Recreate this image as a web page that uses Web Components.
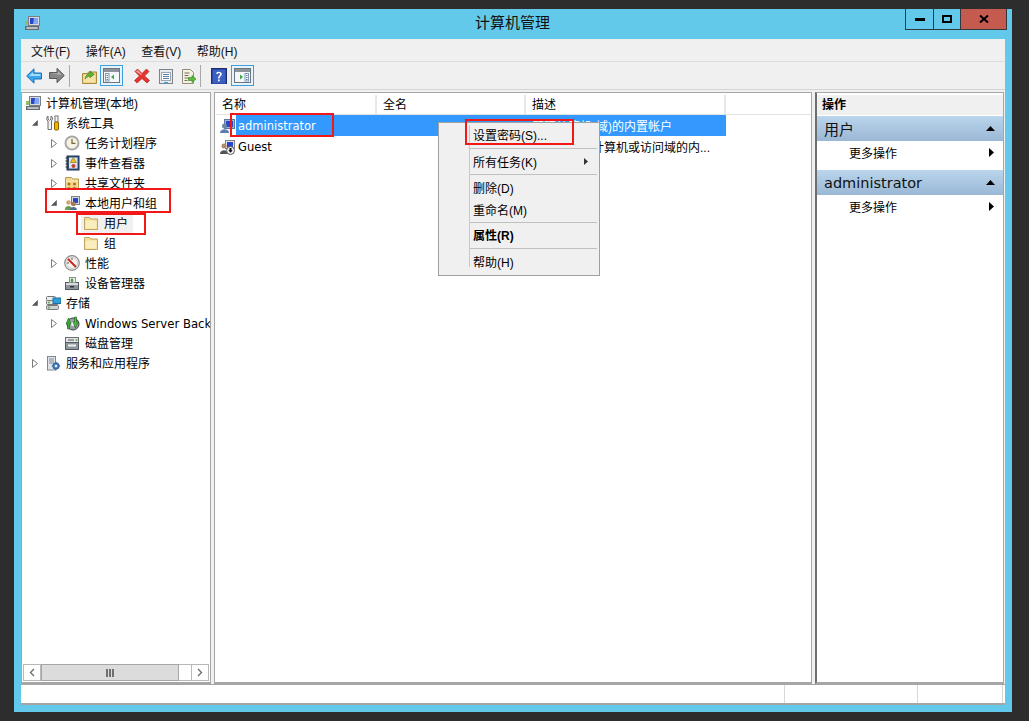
<!DOCTYPE html>
<html lang="zh">
<head>
<meta charset="utf-8">
<title>计算机管理</title>
<style>
  html, body { margin: 0; height: 721px; overflow: hidden; background: #2d2d2d; }
  body { position: relative; font: 12px "Liberation Sans", "Noto Sans CJK SC", sans-serif; color: #000; }
</style>
</head>
<body>
<app-window>
  <title-bar slot="title">计算机管理</title-bar>
  <menu-bar slot="menu"></menu-bar>
  <tool-bar slot="tools"></tool-bar>
  <tree-pane slot="tree">
    <tree-item level="0" icon="computer">计算机管理(本地)</tree-item>
    <tree-item level="1" exp="open" icon="tools">系统工具</tree-item>
    <tree-item level="2" exp="closed" icon="clock">任务计划程序</tree-item>
    <tree-item level="2" exp="closed" icon="event">事件查看器</tree-item>
    <tree-item level="2" exp="closed" icon="share">共享文件夹</tree-item>
    <tree-item level="2" exp="open" icon="users">本地用户和组</tree-item>
    <tree-item level="3" icon="folder" selected>用户</tree-item>
    <tree-item level="3" icon="folder">组</tree-item>
    <tree-item level="2" exp="closed" icon="perf">性能</tree-item>
    <tree-item level="2" icon="device">设备管理器</tree-item>
    <tree-item level="1" exp="open" icon="storage">存储</tree-item>
    <tree-item level="2" exp="closed" icon="backup" latin>Windows Server Backup</tree-item>
    <tree-item level="2" icon="disk">磁盘管理</tree-item>
    <tree-item level="1" exp="closed" icon="services">服务和应用程序</tree-item>
  </tree-pane>
  <list-pane slot="list">
    <list-row icon="admin" name="administrator" desc="管理计算机(域)的内置帐户" selected></list-row>
    <list-row icon="guest" name="Guest" desc="供来宾访问计算机或访问域的内..."></list-row>
  </list-pane>
  <action-pane slot="actions"></action-pane>
  <status-bar slot="status"></status-bar>
</app-window>
<context-menu></context-menu>
<red-box style="left:45px;top:188px;width:126px;height:25px"></red-box>
<red-box style="left:76px;top:213px;width:70px;height:22px"></red-box>
<red-box style="left:230px;top:113px;width:104px;height:24px"></red-box>
<red-box style="left:465px;top:119px;width:109px;height:26px"></red-box>

<script>
const ICONS = {
  computer: `<rect x="4.5" y="1.5" width="11" height="9" fill="#d5d8dc" stroke="#7b8087"/><rect x="6" y="3" width="8" height="6" fill="#2b45c8"/><path d="M10 3h4v6H9z" fill="#7fa6ee"/><rect x="1.5" y="11.5" width="13" height="3" fill="#9a9fa5" stroke="#666b70"/><path d="M3 13h10" stroke="#ddd"/><rect x="1" y="6" width="3" height="4" fill="#8cbf6a"/>`,
  tools: `<path d="M3 1v3l1.5 1.5L6 4V1c1.6.8 2 2.5 1 4L6.5 6v8.5H3V6C1.3 5 1.3 2 3 1z" fill="#f4f4f4" stroke="#6d6d6d"/><rect x="10" y="1" width="3" height="6" fill="#f6f6f6" stroke="#777"/><rect x="9.5" y="7" width="4" height="8" rx="1" fill="#f0b400" stroke="#8a6500"/>`,
  clock: `<circle cx="8" cy="8" r="7.5" fill="#a9a9a9"/><circle cx="8" cy="8" r="5.5" fill="#f7f3e3"/><path d="M8 4v4.3h3.5" fill="none" stroke="#7a6a3c" stroke-width="1.3"/>`,
  event: `<rect x="3" y="1" width="12" height="14" fill="#30527c" stroke="#1f3553"/><rect x="5" y="2.5" width="8.5" height="11" fill="#dce4ee"/><path d="M1.5 3h3M1.5 6h3M1.5 9h3M1.5 12h3" stroke="#333"/><path d="M9.3 2.5l3 5h-6z" fill="#f2c21a" stroke="#8c6a00" stroke-width=".6"/><circle cx="9.5" cy="11" r="2" fill="#c8423c"/>`,
  share: `<path d="M1.5 4V2.5h6L9 4h5.5v10.5h-13z" fill="#f3d88a" stroke="#b49a58"/><path d="M2 6h12" stroke="#fbedc0"/><circle cx="5" cy="9" r="1.5" fill="#b46a28"/><path d="M2.5 14c0-2.5 5-2.5 5 0z" fill="#7a9c46"/><circle cx="10.5" cy="9" r="1.5" fill="#b46a28"/><path d="M8 14c0-2.5 5-2.5 5 0z" fill="#c0503c"/>`,
  users: `<rect x="7.5" y="1.5" width="8" height="8" fill="#d9dcdf" stroke="#7b8087"/><rect x="9" y="3" width="5" height="5" fill="#2b45c8"/><circle cx="4.5" cy="7.5" r="2.3" fill="#d1a477"/><path d="M1 14c0-4 7-4 7 0v1H1z" fill="#6f9a52"/><circle cx="9.5" cy="9" r="2.3" fill="#a97a50"/><path d="M6 15c0-4 7-4 7 0z" fill="#4f6f98"/>`,
  folder: `<path d="M1.5 3.5V2.5h5L8 4h6.5v10.5h-13z" fill="#f5dc94" stroke="#bda566"/><path d="M2.5 13.5V6c4-1 8-1 11 0v7.5z" fill="#fbeebe"/>`,
  perf: `<circle cx="8" cy="8" r="7.3" fill="#f6f4ee" stroke="#8a8a8a" stroke-width="1.2"/><circle cx="8" cy="8" r="5.5" fill="none" stroke="#c9c9c9"/><path d="M4 4l8 8" stroke="#c8201c" stroke-width="1.8"/><path d="M8 3v2M3 8h2" stroke="#555"/>`,
  device: `<rect x="1.5" y="7.5" width="13" height="7" fill="#8e959c" stroke="#555b62"/><rect x="2" y="8" width="12" height="2" fill="#d8dadd"/><rect x="5.5" y="2.5" width="6" height="5" fill="#f1f2f2" stroke="#8a8f94"/><path d="M8 3l2 2.5H9v2H7v-2H6z" fill="#54a04a"/><rect x="6" y="11" width="4" height="1.5" fill="#30353a"/>`,
  storage: `<rect x="1.5" y="5.5" width="12" height="4" rx="1" fill="#dfe1e3" stroke="#777"/><rect x="1.5" y="10.5" width="12" height="4" rx="1" fill="#cfd2d4" stroke="#777"/><rect x="1.5" y="1.5" width="9" height="4" rx="1" fill="#eceded" stroke="#777"/><rect x="8" y="3" width="8" height="5.5" fill="#2f9fd8" stroke="#1b6fa0"/><circle cx="4" cy="12.5" r="1" fill="#66aa44"/><circle cx="4" cy="7.5" r="1" fill="#66aa44"/>`,
  backup: `<circle cx="9" cy="9" r="6" fill="#9aa0a3" stroke="#3a3d40"/><circle cx="9" cy="9" r="2" fill="#f0f0f0"/><path d="M2 9l2.5-6L7 9H5.5v5h-2V9z" fill="#3faa3a" stroke="#1c6a1c" stroke-width=".6"/><path d="M9 7l2.5 6L14 7h-1.5V2h-2v5z" fill="#4cbc44" stroke="#1c6a1c" stroke-width=".6"/>`,
  disk: `<rect x="1.5" y="2.5" width="13" height="5" fill="#e4e5e6" stroke="#6a6e72"/><rect x="1.5" y="7.5" width="13" height="7" fill="#8f969c" stroke="#555b62"/><path d="M4 5h6" stroke="#555"/><rect x="4" y="9.5" width="8" height="2" fill="#f1f1f1"/><circle cx="12.5" cy="5" r="1" fill="#63a84a"/>`,
  services: `<rect x="2.5" y="1.5" width="8" height="13.5" fill="#dfe3e8" stroke="#80868d"/><path d="M4 4h5M4 6h5M4 8h5" stroke="#858c94"/><circle cx="11" cy="11" r="3.2" fill="#4d83c4" stroke="#2a5a94"/><circle cx="11" cy="11" r="1.2" fill="#e8f0fa"/><path d="M11 6.8v1.5M11 13.8v1.4M6.8 11h1.5M13.8 11h1.4" stroke="#3a6ea8" stroke-width="1.2"/>`,
  admin: `<rect x="5.5" y="1.5" width="10" height="9" fill="#9db8dc" stroke="#5e78a0"/><rect x="7" y="3" width="7" height="6" fill="#2b45c8"/><circle cx="5.5" cy="8" r="2.5" fill="#6d86a8"/><path d="M1 15c0-5 9-5 9 0z" fill="#5a7eb0"/>`,
  guest: `<rect x="6.5" y="1.5" width="9" height="8" fill="#dfe3e8" stroke="#7b8087"/><rect x="8" y="3" width="6" height="5" fill="#2b45c8"/><circle cx="5" cy="7" r="2.5" fill="#b08a62"/><path d="M1 15c0-5 8-5 8 0z" fill="#4b5560"/><circle cx="11.5" cy="11.5" r="4" fill="#f4f4f4" stroke="#555"/><path d="M10.5 9h2v2.3h1.2l-2.2 2.5-2.2-2.5h1.2z" fill="#111"/>`,
  back: `<path d="M.7 8L8 .8V5h7.5v6H8v4.200z" fill="#38a6ee" stroke="#1a6fb8"/><path d="M3 8l4-4v2h7.500v2z" fill="#a4dcfb"/>`,
  forward: `<path d="M16.300 8.500L9 1.300V5.500H1.500v6H9v4.200z" fill="#868686" stroke="#5a5a5a"/><path d="M2.500 6.500h7.500V4l3.500 4z" fill="#b5b5b5"/>`,
  up: `<path d="M1.5 5.5h5l1-1.5h8v11.5h-14z" fill="#e8c873" stroke="#a98c42"/><path d="M2.5 14.5V7h12v7.5z" fill="#f5e2a4"/><path d="M4 11c1-4 3-5.5 5-6V3l4 3.5-4 3V8C7.5 8 5.5 9 4 11z" fill="#5fb63c" stroke="#2f8020" stroke-width=".7"/>`,
  pane: `<rect x=".5" y="1.5" width="16" height="14" fill="#f5f7fa" stroke="#6f757c"/><rect x="1" y="2" width="15" height="3" fill="#8c939b"/><rect x="2.5" y="6.5" width="3.5" height="7.5" fill="#fff" stroke="#7d9ab5"/><path d="M3.5 8.5h1.5M3.5 10.5h1.5M3.5 12.5h1.5" stroke="#5e7d9a"/>`,
  del: `<path d="M1 3.5L3.5 1 8 5.5 12.5 1 15 3.5 10.5 8 15.5 12.5 13 15 8 10.5 3 15 .5 12.5 5.5 8z" fill="#e5332e" stroke="#b52420" stroke-width=".7"/><path d="M2 3.5L3.5 2 8 6.5l-1 .5z" fill="#f8a29e"/>`,
  props: `<rect x="1.5" y="1.5" width="13" height="14" fill="#e7e9ec" stroke="#7d8389"/><rect x="3.5" y="4.5" width="9" height="8" fill="#fff" stroke="#a0a6ad"/><path d="M5 6.5h6M5 8.5h6M5 10.5h6" stroke="#5a7da6"/><rect x="6" y="14" width="4" height="1.5" fill="#3ea3de"/>`,
  export: `<path d="M2.5 1.5h8l3 3v11h-11z" fill="#f7f2dc" stroke="#8f8f80"/><path d="M4.5 5h5M4.5 7.5h4M4.5 10h4M4.5 12.5h3" stroke="#6d6d6d"/><path d="M8.5 9.5H12V7.5l4 3.5-4 3.5v-2H8.5z" fill="#5dbb3e" stroke="#2e7f22" stroke-width=".6"/>`,
  help: `<rect x=".5" y=".5" width="15" height="16" fill="#2f4ba8" stroke="#1b2c6e"/><rect x="2" y="2" width="12" height="13" fill="#3a60c4"/><path d="M5 5.5C5.5 3 10.5 3 10.8 5.8 11 8 8.7 8 8.6 10.5H7.1C7 7.500 9.2 7.500 9 5.900 8.800 4.600 7 4.700 6.700 6z" fill="#fff"/><rect x="7" y="11.5" width="1.7" height="1.8" fill="#fff"/>`,
  panegreen: `<rect x=".5" y="1.5" width="16" height="14" fill="#f5f7fa" stroke="#6f757c"/><rect x="1" y="2" width="15" height="3" fill="#8c939b"/><rect x="11" y="6.5" width="3.5" height="7.5" fill="#fff" stroke="#7d9ab5"/><path d="M12 8.5h1.5M12 10.5h1.5M12 12.5h1.5" stroke="#5e7d9a"/><path d="M6 7.5l3 2.5-3 2.5z" fill="#3aa84a"/>`
};
ICONS.panegreenleft = ICONS.pane + `<path d="M11 7.5L8 10l3 2.5z" fill="#3aa84a"/>`;

class WinIcon extends HTMLElement {
  connectedCallback() {
    const s = this.getAttribute('size') || 16;
    const w = this.getAttribute('w') || s;
    this.attachShadow({ mode: 'open' }).innerHTML = `
      <style>:host { display: inline-flex; flex: none; width: ${w}px; height: ${s}px; } svg { display: block; }</style>
      <svg width="${w}" height="${s}" viewBox="0 0 ${w == 17 ? 17 : 16} ${w == 17 ? 17 : 16}">${ICONS[this.getAttribute('name')] || ''}</svg>`;
  }
}
customElements.define('win-icon', WinIcon);

class AppWindow extends HTMLElement {
  constructor() {
    super();
    this.attachShadow({ mode: 'open' }).innerHTML = `
      <style>
        :host { display: block; position: absolute; left: 14px; top: 9px; width: 998px; height: 703px; box-sizing: border-box;
                background: #63c9ea; padding: 0 7px 7px; }
        .frame { display: flex; flex-direction: column; height: 100%; }
        .inner { flex: 1; display: flex; flex-direction: column; background: #f0f0f0; min-height: 0; }
        .panes { flex: 1; display: flex; padding-top: 2px; min-height: 0; }
      </style>
      <div class="frame">
        <slot name="title"></slot>
        <div class="inner">
          <slot name="menu"></slot>
          <slot name="tools"></slot>
          <div class="panes">
            <slot name="tree"></slot>
            <slot name="list"></slot>
            <slot name="actions"></slot>
          </div>
          <slot name="status"></slot>
        </div>
      </div>`;
  }
}
customElements.define('app-window', AppWindow);

class TitleBar extends HTMLElement {
  constructor() {
    super();
    this.attachShadow({ mode: 'open' }).innerHTML = `
      <style>
        :host { display: flex; height: 30px; position: relative; font-size: 15px; line-height: 28px; justify-content: center; flex: none; }
        .t { padding-right: 1px; color: #111; }
        win-icon { position: absolute; left: 3px; top: 6px; }
        .btns { position: absolute; right: -2px; top: 0; display: flex; height: 20px; border: solid #33383c; border-width: 0 1px 1px; }
        .b { display: flex; align-items: center; justify-content: center; width: 27px; border-left: 1px solid #33383c; box-sizing: border-box; }
        .b:first-child { border-left: 0; width: 27px; }
        .close { width: 46px; background: #c55a4e; }
      </style>
      <win-icon name="computer"></win-icon>
      <span class="t"><slot></slot></span>
      <div class="btns">
        <div class="b"><svg width="10" height="3"><rect width="10" height="3" fill="#000"/></svg></div>
        <div class="b"><svg width="10" height="8"><rect x="1" y="1" width="8" height="6" fill="none" stroke="#000" stroke-width="2"/></svg></div>
        <div class="b close"><svg width="10" height="8"><path d="M1 .5l8 7M9 .5l-8 7" stroke="#000" stroke-width="2"/></svg></div>
      </div>`;
  }
}
customElements.define('title-bar', TitleBar);

class MenuBar extends HTMLElement {
  constructor() {
    super();
    this.attachShadow({ mode: 'open' }).innerHTML = `
      <style>
        :host { display: flex; height: 22px; align-items: center; padding-left: 10px; gap: 15.5px; border-bottom: 1px solid #dcdcdc; flex: none; color: #111; }
      </style>
      <span>文件(F)</span><span>操作(A)</span><span>查看(V)</span><span>帮助(H)</span>`;
  }
}
customElements.define('menu-bar', MenuBar);

class ToolBar extends HTMLElement {
  constructor() {
    super();
    this.attachShadow({ mode: 'open' }).innerHTML = `
      <style>
        :host { display: flex; height: 27px; align-items: center; padding-left: 5px; border-bottom: 1px solid #d4d4d4; flex: none; }
        .sep { width: 1px; height: 22px; background: #a8a8a8; flex: none; }
        .on { display: flex; align-items: center; justify-content: center; width: 21px; height: 19px; border: 1px solid #3d9fdc; background: #e5f3fb; flex: none; }
      </style>
      <win-icon name="back" style="margin-right:6px"></win-icon>
      <win-icon name="forward" w="17" size="17" style="margin-right:4px"></win-icon>
      <span class="sep" style="margin-right:11px"></span>
      <win-icon name="up" style="margin-right:3px"></win-icon>
      <span class="on" style="margin-right:11px"><win-icon name="panegreenleft" w="17" size="17"></win-icon></span>
      <win-icon name="del" style="margin-right:8px"></win-icon>
      <win-icon name="props" style="margin-right:6px"></win-icon>
      <win-icon name="export" style="margin-right:4px"></win-icon>
      <span class="sep" style="margin-right:10px"></span>
      <win-icon name="help" style="margin-right:4px"></win-icon>
      <span class="on"><win-icon name="panegreen" w="17" size="17"></win-icon></span>`;
  }
}
customElements.define('tool-bar', ToolBar);

class TreePane extends HTMLElement {
  constructor() {
    super();
    this.attachShadow({ mode: 'open' }).innerHTML = `
      <style>
        :host { display: flex; flex-direction: column; width: 190px; flex: none; box-sizing: border-box; background: #fff;
                border: 1px solid #a6a6a6; border-bottom-width: 2px; }
        .scroll { flex: 1; min-height: 0; overflow: hidden; }
        .sb { flex: none; display: flex; margin: 0 1px 1px; border: 1px solid #b8b8b8; height: 15px; background: #fff; }
        .arr { width: 16px; display: flex; align-items: center; justify-content: center; border-right: 1px solid #b8b8b8; flex: none; }
        .arr:last-child { border-right: 0; border-left: 1px solid #b8b8b8; }
        .thumb { width: 136px; background: #dcdcdc; border: 1px solid #a6a6a6; margin: -1px 0; display: flex; align-items: center; justify-content: center; flex: none; }
        .track { flex: 1; }
      </style>
      <div class="scroll"><slot></slot></div>
      <div class="sb">
        <div class="arr"><svg width="6" height="9"><path d="M5 1L1.5 4.5 5 8" fill="none" stroke="#6a6a6a" stroke-width="1.3"/></svg></div>
        <div class="thumb"><svg width="8" height="8"><path d="M0 0h2v8H0zM3 0h2v8H3zM6 0h2v8H6z" fill="#707070"/></svg></div>
        <div class="track"></div>
        <div class="arr"><svg width="6" height="9"><path d="M1 1l3.5 3.5L1 8" fill="none" stroke="#6a6a6a" stroke-width="1.3"/></svg></div>
      </div>`;
  }
}
customElements.define('tree-pane', TreePane);

class TreeItem extends HTMLElement {
  connectedCallback() {
    const level = +this.getAttribute('level');
    const exp = this.getAttribute('exp');
    const arrow = exp === 'open'
      ? '<svg width="8" height="8"><path d="M6.5 1.5v5h-5z" fill="#595959" stroke="#595959" stroke-width=".6"/></svg>'
      : exp === 'closed'
        ? '<svg width="8" height="11"><path d="M1.5 1.5l5 4-5 4z" fill="#fff" stroke="#7a7a7a"/></svg>'
        : '';
    const pad = level === 0 ? 3 : 19 * level - 14;
    this.attachShadow({ mode: 'open' }).innerHTML = `
      <style>
        :host { display: flex; align-items: center; height: 20px; white-space: nowrap; padding-left: ${pad}px; }
        .exp { width: 16px; margin-right: 2px; display: flex; justify-content: center; align-items: center; flex: none; }
        .body { display: flex; align-items: center; gap: 5px; }
        .lbl { padding-bottom: 2px; }
        :host([latin]) .lbl { padding: 2px 0 0; font: 11.7px "DejaVu Sans", sans-serif; }
        :host([selected]) .body { background: #f0f0f0; margin-left: -2px; padding: 2px 4px 2px 2px; width: 46px; }
      </style>
      ${level ? `<span class="exp">${arrow}</span>` : ''}
      <span class="body"><win-icon name="${this.getAttribute('icon')}"></win-icon><span class="lbl"><slot></slot></span></span>`;
  }
}
customElements.define('tree-item', TreeItem);

class ListPane extends HTMLElement {
  constructor() {
    super();
    this.attachShadow({ mode: 'open' }).innerHTML = `
      <style>
        :host { display: block; width: 598px; flex: none; margin-left: 3px; background: #fff; box-sizing: border-box;
                border: 1px solid #a6a6a6; border-bottom-width: 2px; padding-top: 2px; }
        .head { display: flex; height: 20px; box-sizing: border-box; border-bottom: 1px solid #e3e3e3; margin-left: 1px; }
        .head div { padding-left: 6px; line-height: 20px; border-right: 2px solid #e8e8e8; box-sizing: border-box; }
      </style>
      <div class="head">
        <div style="width:161px">名称</div><div style="width:149px">全名</div><div style="width:200px">描述</div>
      </div>
      <slot></slot>`;
  }
}
customElements.define('list-pane', ListPane);

class ListRow extends HTMLElement {
  connectedCallback() {
    this.attachShadow({ mode: 'open' }).innerHTML = `
      <style>
        :host { display: flex; height: 21px; align-items: center; padding-left: 4px; }
        .cells { display: flex; width: 490px; height: 100%; align-items: center; margin-left: 1px; padding-left: 2px; box-sizing: border-box; }
        :host([selected]) .cells { background: #3399ff; color: #fff; }
        .name { width: 294px; font: 11.5px "DejaVu Sans", sans-serif; }
      </style>
      <win-icon name="${this.getAttribute('icon')}"></win-icon>
      <div class="cells"><span class="name">${this.getAttribute('name')}</span><span>${this.getAttribute('desc')}</span></div>`;
  }
}
customElements.define('list-row', ListRow);

class ActionPane extends HTMLElement {
  constructor() {
    super();
    this.attachShadow({ mode: 'open' }).innerHTML = `
      <style>
        :host { display: block; width: 189px; flex: none; margin-left: 3px; box-sizing: border-box; background: #fff;
                border: 1px solid #a6a6a6; border-left: 2px solid #6e6e6e; border-bottom-width: 2px; padding-top: 2px; }
        .h { height: 20px; line-height: 20px; background: #f0f0f0; padding-left: 5px; font-weight: bold; margin-bottom: 1px; }
        .sec { display: flex; justify-content: space-between; align-items: center; height: 25px; padding: 0 8px 0 7px; font-size: 15px;
               background: linear-gradient(#bad5ec, #9ab7d5); color: #111; }
        .sec .n { font: 14.5px "DejaVu Sans", sans-serif; }
        .act { display: flex; justify-content: space-between; align-items: center; height: 22px; padding: 0 9px 0 32px; margin-bottom: 7px; }
      </style>
      <div class="h">操作</div>
      <div class="sec">用户<svg width="9" height="5"><path d="M0 5L4.5 0 9 5z"/></svg></div>
      <div class="act">更多操作<svg width="5" height="9"><path d="M0 0l5 4.5L0 9z"/></svg></div>
      <div class="sec"><span class="n">administrator</span><svg width="9" height="5"><path d="M0 5L4.5 0 9 5z"/></svg></div>
      <div class="act">更多操作<svg width="5" height="9"><path d="M0 0l5 4.5L0 9z"/></svg></div>`;
  }
}
customElements.define('action-pane', ActionPane);

class StatusBar extends HTMLElement {
  constructor() {
    super();
    this.attachShadow({ mode: 'open' }).innerHTML = `
      <style>
        :host { display: flex; height: 21px; flex: none; box-sizing: border-box; background: #fff; border-top: 1px solid #a6a6a6; border-bottom: 2px solid #a6a6a6; }
        div { border-right: 1px solid #d8d8d8; box-sizing: border-box; flex: none; }
      </style>
      <div style="width:764px"></div><div style="width:133px"></div><div style="width:85px"></div>`;
  }
}
customElements.define('status-bar', StatusBar);

class ContextMenu extends HTMLElement {
  constructor() {
    super();
    const item = (t, h, pb = 0) => `<div class="i" style="height:${h}px;padding-bottom:${pb}px">${t}</div>`;
    this.attachShadow({ mode: 'open' }).innerHTML = `
      <style>
        :host { display: block; position: absolute; left: 438px; top: 122px; width: 162px; height: 154px; box-sizing: border-box;
                background: #f0f0f0; border: 1px solid #a0a0a0; padding-top: 1px; }
        .rail { position: absolute; left: 30px; top: 2px; bottom: 8px; width: 1px; background: #c8c8c8; }
        .i { display: flex; align-items: center; justify-content: space-between; padding: 0 11px 0 34px; box-sizing: border-box; }
        .s { height: 1px; background: #c0c0c0; margin: 0 2px 0 31px; }
        b { font-weight: bold; }
      </style>
      <div class="rail"></div>
      ${item('设置密码(S)...', 24, 3)}
      <div class="s"></div>
      ${item('所有任务(K)<svg width="4" height="7"><path d="M0 0l4 3.5L0 7z" fill="#333"/></svg>', 25)}
      <div class="s"></div>
      ${item('删除(D)', 24)}
      ${item('重命名(M)', 23, 2)}
      <div class="s"></div>
      ${item('<b>属性(R)</b>', 25, 2)}
      <div class="s"></div>
      ${item('帮助(H)', 25)}`;
  }
}
customElements.define('context-menu', ContextMenu);

class RedBox extends HTMLElement {
  constructor() {
    super();
    this.attachShadow({ mode: 'open' }).innerHTML = `
      <style>:host { display: block; position: absolute; box-sizing: border-box; border: 2px solid #f21818; pointer-events: none; }</style>`;
  }
}
customElements.define('red-box', RedBox);
</script>
</body>
</html>
